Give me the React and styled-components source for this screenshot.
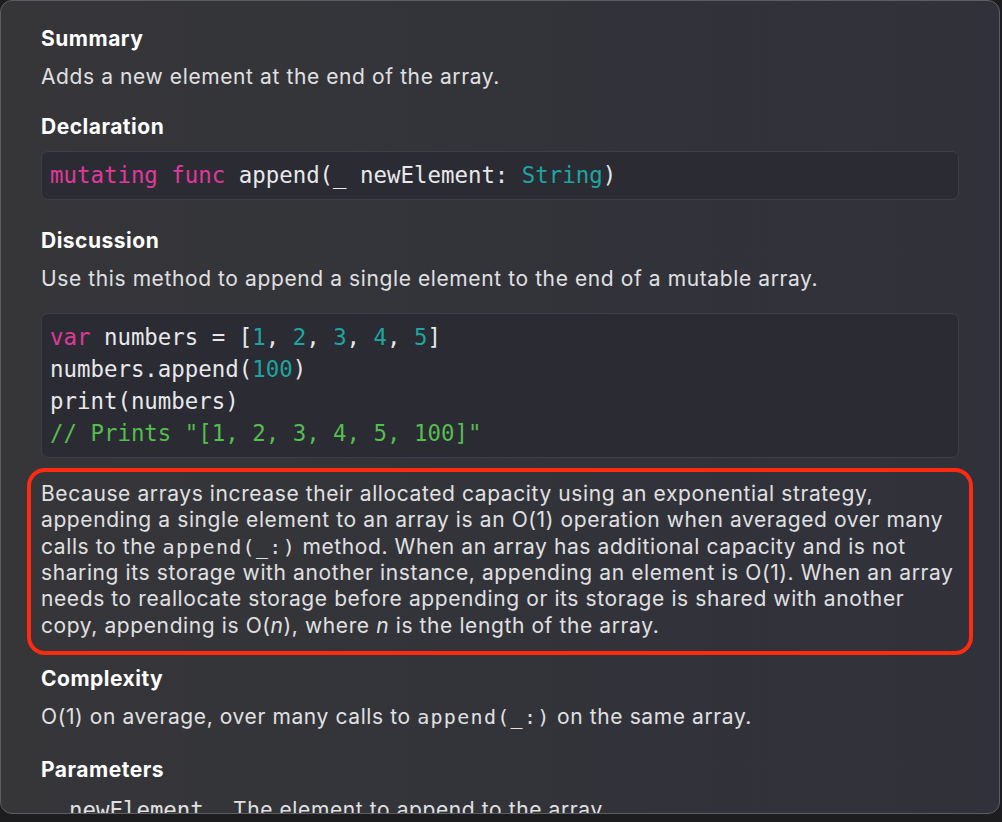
import React from "react";
import styled, { createGlobalStyle } from "styled-components";

const GlobalStyle = createGlobalStyle`
  html, body {
    margin: 0;
    padding: 0;
    background: #1d1d20;
    width: 1002px;
    height: 822px;
    overflow: hidden;
  }
`;

const sans = `Inter, "Noto Sans", "Liberation Sans", sans-serif`;
const mono = `"DejaVu Sans Mono", "Liberation Mono", monospace`;

const Panel = styled.div`
  position: relative;
  box-sizing: border-box;
  width: 1000px;
  height: 814px;
  border: 1px solid #5d5e63;
  border-radius: 12px;
  background: linear-gradient(90deg, #363639 0%, #333439 45%, #30313a 100%);
  overflow: hidden;
  font-family: ${sans};
  color: #dedee0;
  &::before {
    content: "";
    position: absolute;
    top: -1px;
    left: 478px;
    width: 46px;
    height: 2px;
    background: #343539;
  }
`;

const Content = styled.div`
  display: flex;
  flex-direction: column;
  padding: 25px 40px 0 40px;
`;

const Heading = styled.h3`
  margin: ${(p) => p.$top || 0}px 0 0 0;
  font-size: 21px;
  line-height: 26px;
  font-weight: 700;
  color: #ffffff;
  letter-spacing: 0.5px;
`;

const Body = styled.p`
  margin: ${(p) => p.$top || 12}px 0 0 0;
  font-size: 21px;
  line-height: 26.4px;
  letter-spacing: 0.6px;
  color: #e0e0e2;
  em {
    font-style: italic;
  }
`;

const InlineCode = styled.code`
  font-family: ${mono};
  font-size: 20px;
  line-height: 1;
  letter-spacing: 1.3px;
  color: #e0e0e2;
`;

const CodeBlock = styled.pre`
  margin: ${(p) => p.$top || 12}px 0 0 0;
  padding: 7px 8px 8px 8px;
  border: 1px solid #3e3f48;
  border-radius: 7px;
  background: #2a2b33;
  font-family: ${mono};
  font-size: 22.4px;
  line-height: 32px;
  color: #e8e8ea;
  white-space: pre;
`;

const Tok = styled.span`
  color: ${(p) =>
    p.$kind === "kw"
      ? "#e0399b"
      : p.$kind === "num"
      ? "#1fa59f"
      : p.$kind === "comment"
      ? "#56bd4f"
      : "#e8e8ea"};
`;

const Highlight = styled.div`
  margin: 10px -14px 0 -14px;
  padding: 9px 10px 12px 10px;
  border: 4px solid #ff2a10;
  border-radius: 18px;
  p {
    margin: 0;
  }
`;

const ParamRow = styled.div`
  display: grid;
  grid-template-columns: 164px 1fr;
  margin-top: 14px;
  padding-left: 28px;
  font-size: 21px;
  letter-spacing: 0.6px;
  line-height: 26px;
  color: #e0e0e2;
`;

const ParamName = styled.span`
  font-family: ${mono};
  font-size: 22.4px;
  letter-spacing: 0;
`;

export default function App() {
  return (
    <>
      <GlobalStyle />
      <Panel>
        <Content>
          <Heading>Summary</Heading>
          <Body>Adds a new element at the end of the array.</Body>

          <Heading $top={24}>Declaration</Heading>
          <CodeBlock $top={11}>
            <Tok $kind="kw">mutating</Tok> <Tok $kind="kw">func</Tok> append(_ newElement:{" "}
            <Tok $kind="num">String</Tok>)
          </CodeBlock>

          <Heading $top={28}>Discussion</Heading>
          <Body>Use this method to append a single element to the end of a mutable array.</Body>

          <CodeBlock $top={20}>
            <Tok $kind="kw">var</Tok> numbers = [<Tok $kind="num">1</Tok>, <Tok $kind="num">2</Tok>,{" "}
            <Tok $kind="num">3</Tok>, <Tok $kind="num">4</Tok>, <Tok $kind="num">5</Tok>]{"\n"}
            numbers.append(<Tok $kind="num">100</Tok>){"\n"}
            print(numbers){"\n"}
            <Tok $kind="comment">// Prints "[1, 2, 3, 4, 5, 100]"</Tok>
          </CodeBlock>

          <Highlight>
            <Body>
              Because arrays increase their allocated capacity using an exponential strategy,
              appending a single element to an array is an O(1) operation when averaged over many
              calls to the <InlineCode>append(_:)</InlineCode> method. When an array has additional
              capacity and is not sharing its storage with another instance, appending an element is
              O(1). When an array needs to reallocate storage before appending or its storage is
              shared with another copy, appending is O(<em>n</em>), where <em>n</em> is the length of
              the array.
            </Body>
          </Highlight>

          <Heading $top={11}>Complexity</Heading>
          <Body>
            O(1) on average, over many calls to <InlineCode>append(_:)</InlineCode> on the same
            array.
          </Body>

          <Heading $top={26}>Parameters</Heading>
          <ParamRow>
            <ParamName>newElement</ParamName>
            <span>The element to append to the array.</span>
          </ParamRow>
        </Content>
      </Panel>
    </>
  );
}
